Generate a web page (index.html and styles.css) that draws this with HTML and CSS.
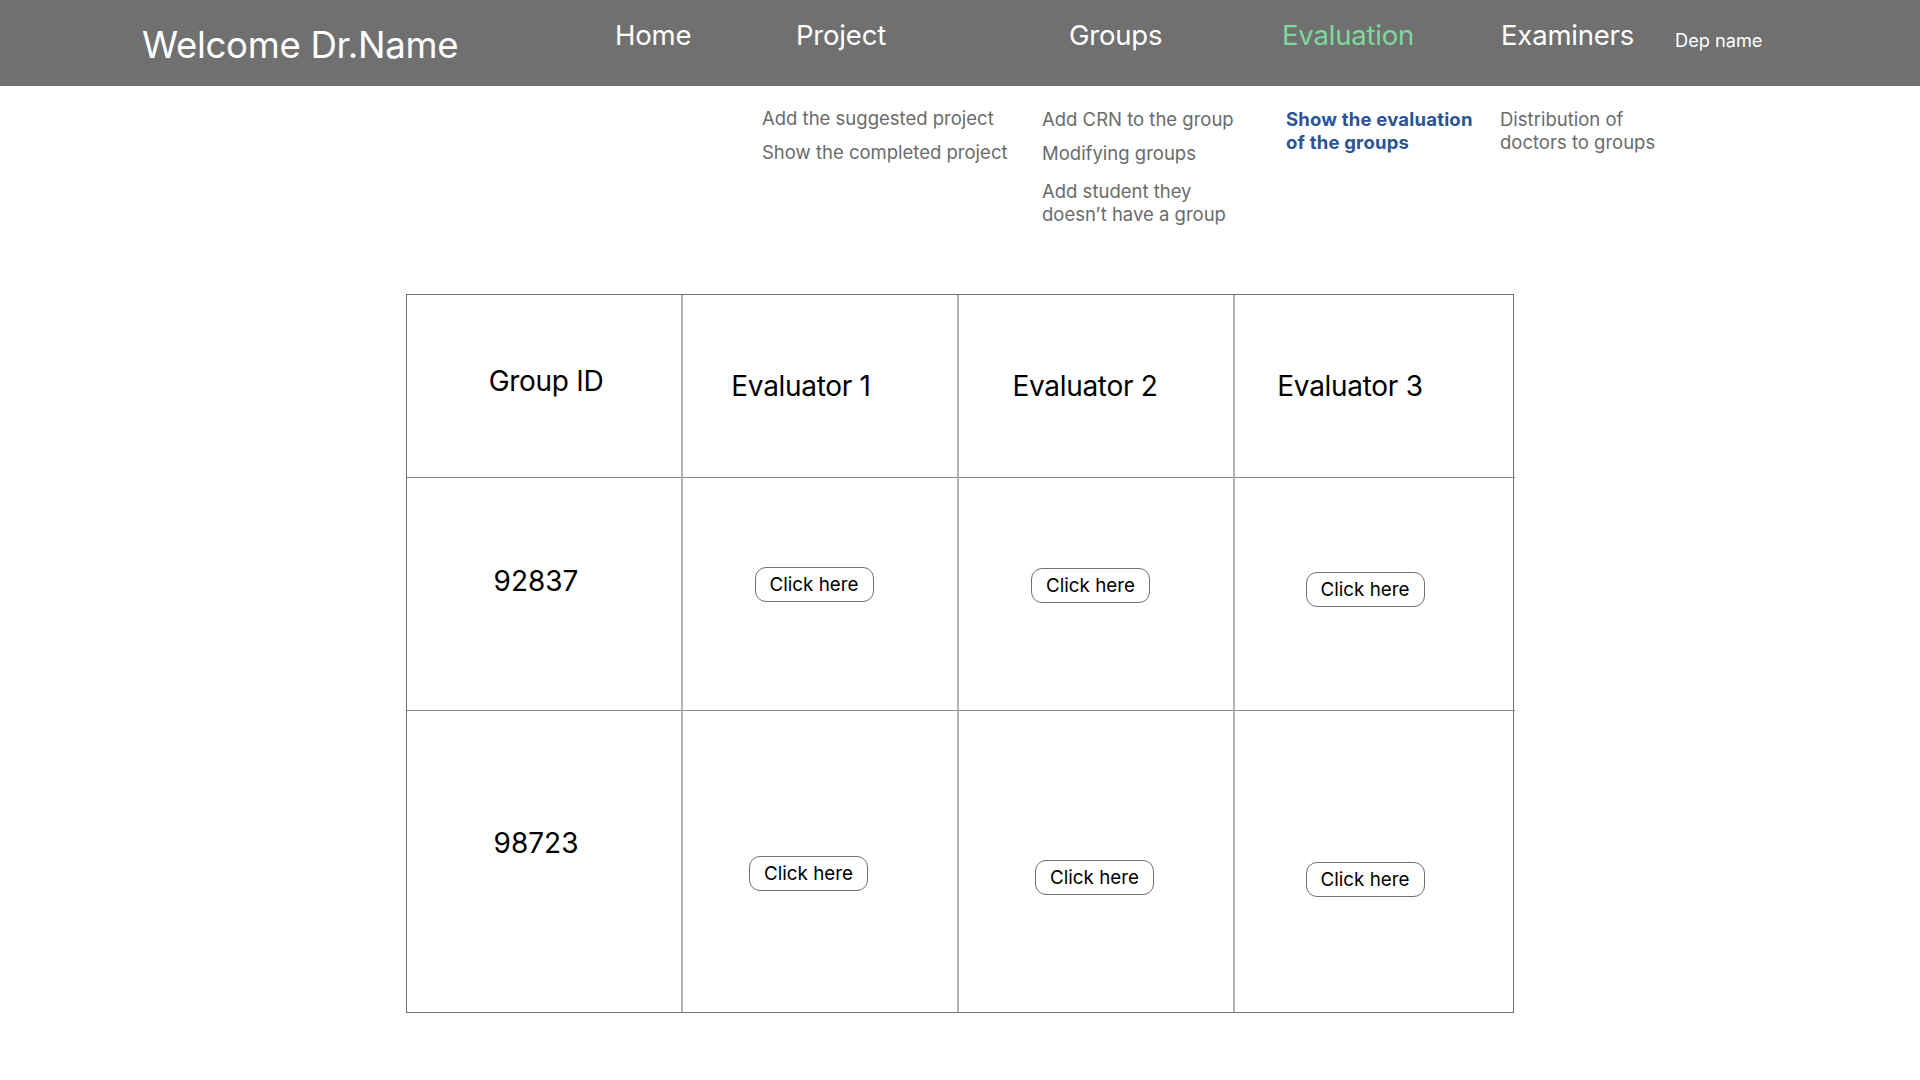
FILE: index.html
```html
<!DOCTYPE html>
<html lang="en">
<head>
<meta charset="utf-8">
<title>Evaluation</title>
<link rel="stylesheet" href="styles.css">
</head>
<body>
<header class="topbar">
  <div class="welcome">Welcome Dr.Name</div>
  <nav class="nav">
    <a class="nav-item nav-home">Home</a>
    <a class="nav-item nav-project">Project</a>
    <a class="nav-item nav-groups">Groups</a>
    <a class="nav-item nav-eval active">Evaluation</a>
    <a class="nav-item nav-exam">Examiners</a>
    <span class="dep">Dep name</span>
  </nav>
</header>

<section class="submenu">
  <ul class="sub-col sub-project">
    <li>Add the suggested project</li>
    <li>Show the completed project</li>
  </ul>
  <ul class="sub-col sub-groups">
    <li>Add CRN to the group</li>
    <li>Modifying groups</li>
    <li class="two-line">Add student they<br>doesn’t have a group</li>
  </ul>
  <ul class="sub-col sub-eval">
    <li class="current">Show the evaluation<br>of the groups</li>
  </ul>
  <ul class="sub-col sub-exam">
    <li>Distribution of<br>doctors to groups</li>
  </ul>
</section>

<main class="board">
  <div class="grid">
    <div class="cell head h-id">Group ID</div>
    <div class="cell head h-e1">Evaluator 1</div>
    <div class="cell head h-e2">Evaluator 2</div>
    <div class="cell head h-e3 last">Evaluator 3</div>

    <div class="cell r1 num">92837</div>
    <div class="cell r1 act"><button class="btn b11">Click here</button></div>
    <div class="cell r1 act"><button class="btn b12">Click here</button></div>
    <div class="cell r1 act last"><button class="btn b13">Click here</button></div>

    <div class="cell r2 num bottom">98723</div>
    <div class="cell r2 act bottom"><button class="btn b21">Click here</button></div>
    <div class="cell r2 act bottom"><button class="btn b22">Click here</button></div>
    <div class="cell r2 act bottom last"><button class="btn b23">Click here</button></div>
  </div>
</main>
</body>
</html>
```

FILE: styles.css
```css
* { box-sizing: border-box; }

html, body {
  margin: 0;
  padding: 0;
  background: #ffffff;
  font-family: "Inter", "Noto Sans", "Liberation Sans", sans-serif;
  color: #000;
}

/* ---------- Top bar ---------- */
.topbar {
  height: 86px;
  background: #707070;
  display: flex;
  align-items: flex-start;
  padding-left: 142px;
}

.welcome {
  width: 473px;
  margin-top: 22px;
  font-size: 36.6px;
  line-height: 46px;
  color: #ffffff;
  letter-spacing: -0.3px;
}

.nav {
  display: grid;
  grid-template-columns: 181px 273px 213px 219px 174px auto;
  align-items: start;
}

.nav-item {
  margin-top: 18px;
  font-size: 27.5px;
  line-height: 34px;
  color: #ffffff;
  letter-spacing: -0.2px;
  cursor: pointer;
}

.nav-item.active { color: #7dd99b; }

.dep {
  margin-top: 28px;
  font-size: 18.2px;
  line-height: 24px;
  color: #ffffff;
}

/* ---------- Sub menu ---------- */
.submenu {
  display: grid;
  grid-template-columns: 280px 244px 214px auto;
  margin: 22px 0 0 762px;
  height: 118px;
}

.sub-col {
  list-style: none;
  margin: 0;
  padding: 0;
  display: flex;
  flex-direction: column;
  gap: 11px;
  font-size: 18.5px;
  line-height: 23px;
  color: #6b6b6b;
}

.sub-project { margin-top: -1px; }
.sub-groups .two-line { margin-top: 4px; }

.sub-col .current {
  color: #2a5494;
  font-weight: 700;
  letter-spacing: 0.2px;
}

/* ---------- Table ---------- */
.board {
  display: flex;
  justify-content: center;
  margin-top: 68px;
}

.grid {
  display: grid;
  grid-template-columns: 276px 276px 276px 280px;
  grid-template-rows: 183px 233px 301px;
  border: 1.5px solid #6f6f6f;
  width: 1108px;
}

.cell {
  border-right: 2px solid #b3b3b3;
  border-bottom: 1.5px solid #8a8a8a;
  display: flex;
  justify-content: center;
  align-items: flex-start;
}

.cell.last { border-right: none; }
.cell.bottom { border-bottom: none; }

.head {
  align-items: center;
  font-size: 28px;
  line-height: 34px;
  letter-spacing: -0.3px;
}

.h-id { padding-left: 4px; padding-bottom: 10px; }
.h-e1 { padding-right: 38px; }
.h-e2 { padding-right: 22px; }
.h-e3 { padding-right: 50px; }

.num {
  font-size: 28px;
  line-height: 34px;
  padding-right: 16px;
}

.r1.num { padding-top: 86px; }
.r2.num { padding-top: 115px; }

.btn {
  font-family: "Inter", "Noto Sans", "Liberation Sans", sans-serif;
  font-size: 18.8px;
  line-height: 22px;
  height: 35px;
  width: 119px;
  padding: 0;
  background: #ffffff;
  color: #000;
  border: 1px solid #6f6f6f;
  border-radius: 11px;
  cursor: pointer;
}

.b11 { margin-top: 89px; margin-right: 12px; }
.b12 { margin-top: 90px; margin-right: 11px; }
.b13 { margin-top: 94px; margin-right: 20px; }
.b21 { margin-top: 145px; margin-right: 23px; }
.b22 { margin-top: 149px; margin-right: 3px; }
.b23 { margin-top: 151px; margin-right: 20px; }
```
